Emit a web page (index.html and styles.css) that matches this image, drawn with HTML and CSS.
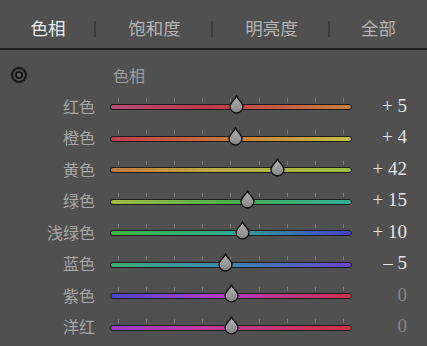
FILE: index.html
```html
<!DOCTYPE html>
<html lang="zh">
<head>
    <meta charset="UTF-8">
    <title>HSL</title>
    <link rel="stylesheet" href="styles.css">
</head>
<body>
    <div class="tabs">
        <div class="tab active">色相</div>
        <div class="tab">饱和度</div>
        <div class="tab">明亮度</div>
        <div class="tab last">全部</div>
    </div>

    <div class="panel">
        <div class="panel-head">
            <svg class="target" width="18" height="18" viewBox="0 0 18 18">
                <circle cx="9" cy="9" r="7" fill="none" stroke="#151515" stroke-width="2"/>
                <circle cx="9" cy="9" r="3" fill="#6a6a6a" stroke="#151515" stroke-width="2"/>
            </svg>
            <span class="head-title">色相</span>
        </div>

        <div class="row">
            <span class="label">红色</span>
            <div class="track red"><span class="thumb" style="left: 52.31%"></span></div>
            <span class="value">+ 5</span>
        </div>
        <div class="row">
            <span class="label">橙色</span>
            <div class="track orange"><span class="thumb" style="left: 51.85%"></span></div>
            <span class="value">+ 4</span>
        </div>
        <div class="row">
            <span class="label">黄色</span>
            <div class="track yellow"><span class="thumb" style="left: 69.44%"></span></div>
            <span class="value">+ 42</span>
        </div>
        <div class="row">
            <span class="label">绿色</span>
            <div class="track green"><span class="thumb" style="left: 56.94%"></span></div>
            <span class="value">+ 15</span>
        </div>
        <div class="row">
            <span class="label">浅绿色</span>
            <div class="track aqua"><span class="thumb" style="left: 54.63%"></span></div>
            <span class="value">+ 10</span>
        </div>
        <div class="row">
            <span class="label">蓝色</span>
            <div class="track blue"><span class="thumb" style="left: 47.69%"></span></div>
            <span class="value">&ndash; 5</span>
        </div>
        <div class="row">
            <span class="label">紫色</span>
            <div class="track purple"><span class="thumb" style="left: 50%"></span></div>
            <span class="value zero">0</span>
        </div>
        <div class="row">
            <span class="label">洋红</span>
            <div class="track magenta"><span class="thumb" style="left: 50%"></span></div>
            <span class="value zero">0</span>
        </div>
    </div>
</body>
</html>
```

FILE: styles.css
```css
body {
    margin: 0;
    width: 427px;
    height: 346px;
    overflow: hidden;
    background: #505050;
    font-family: "Noto Sans CJK SC", sans-serif;
}
.tabs {
    display: grid;
    grid-template-columns: 96px 117px 117px 1fr;
    height: 48px;
    border-bottom: 2px solid #1e1e1e;
    align-items: center;
}
.tab {
    position: relative;
    text-align: center;
    font-size: 17.5px;
    color: #b4b4b4;
    padding-top: 6px;
}
.tab.active { color: #ececec; }
.tab::after {
    content: "";
    position: absolute;
    right: 0;
    top: 12px;
    width: 2px;
    height: 16px;
    background: #3c3c3c;
}
.tab.last::after { display: none; }

.panel-head {
    display: flex;
    align-items: center;
    height: 40px;
    padding-top: 10px;
    box-sizing: border-box;
}
.target { margin-left: 10px; }
.head-title {
    margin-left: 85px;
    font-size: 16px;
    color: #9c9c9c;
}
.row {
    display: grid;
    grid-template-columns: 95px 242px 40px;
    column-gap: 15px;
    height: 31.5px;
    align-items: center;
}
.label {
    text-align: right;
    font-size: 16px;
    color: #a6a6a6;
}
.track {
    position: relative;
    height: 4px;
    margin-top: 3px;
    border: 1px solid #1c1c1c;
    border-radius: 3px;
}
.track::before {
    content: "";
    position: absolute;
    left: 7px;
    right: 7px;
    top: -7px;
    height: 4px;
    background: repeating-linear-gradient(90deg, #7c7c7c 0 1px, transparent 1px 28.1px);
}
.thumb {
    position: absolute;
    top: -10px;
    width: 15px;
    height: 19px;
    margin-left: -7.5px;
    background: url("data:image/svg+xml,%3Csvg xmlns='http://www.w3.org/2000/svg' width='15' height='19' viewBox='0 0 15 19'%3E%3ClinearGradient id='g' x1='0' y1='0' x2='0' y2='1'%3E%3Cstop offset='0' stop-color='%23b4b4b4'/%3E%3Cstop offset='1' stop-color='%23858585'/%3E%3C/linearGradient%3E%3Cpath d='M7.5 1 C9 4.5 14 8 14 11.5 A6.5 6.5 0 0 1 1 11.5 C1 8 6 4.5 7.5 1Z' fill='url(%23g)' stroke='%23111' stroke-width='1.4'/%3E%3C/svg%3E") no-repeat;
}
.value {
    text-align: right;
    font-family: "Liberation Serif", serif;
    font-size: 19px;
    color: #e4e4e4;
    white-space: nowrap;
}
.value.zero { color: #858585; }

.red { background: linear-gradient(90deg, #b84a78, #c03848 40%, #c9803f); }
.orange { background: linear-gradient(90deg, #c03c4c, #c8783a 50%, #c4c042); }
.yellow { background: linear-gradient(90deg, #c67a3e, #bcae44 45%, #9cc040); }
.green { background: linear-gradient(90deg, #a4bc40, #4caf4e 50%, #2eb09a); }
.aqua { background: linear-gradient(90deg, #42b442, #2ea890 50%, #4640c4); }
.blue { background: linear-gradient(90deg, #42aa74, #3a8ab0 45%, #6a48c2); }
.purple { background: linear-gradient(90deg, #4c48c8, #b040c0 45%, #c83050); }
.magenta { background: linear-gradient(90deg, #9a40c2, #c23c9a 45%, #c83440); }
```
